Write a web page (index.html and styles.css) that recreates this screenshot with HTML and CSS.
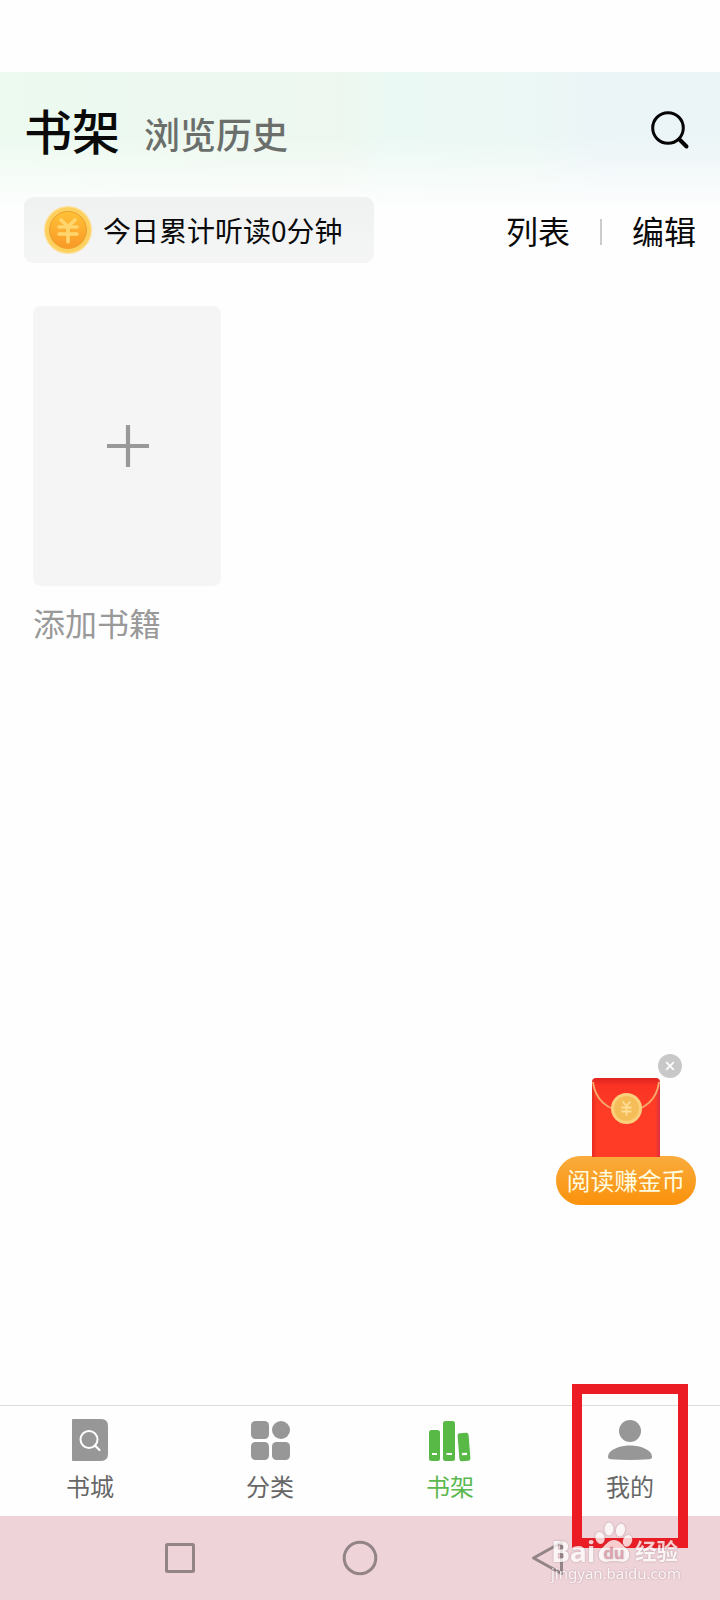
FILE: index.html
```html
<!DOCTYPE html>
<html lang="zh-CN">
<head>
<meta charset="utf-8">
<title>书架</title>
<link rel="stylesheet" href="styles.css">
</head>
<body>
<div class="screen">
  <header class="header">
    <div class="title-row">
      <h1 class="title">书架</h1>
      <span class="history">浏览历史</span>
      <svg class="search" width="40" height="40" viewBox="0 0 40 40" fill="none" stroke="#050505">
        <circle cx="18" cy="18" r="15.3" stroke-width="3"/>
        <path d="M29.5 29.5L36.5 36.5" stroke-width="4" stroke-linecap="round"/>
      </svg>
    </div>
    <div class="tools">
      <div class="reading">
        <svg width="50" height="50" viewBox="0 0 50 50">
          <defs>
            <linearGradient id="coin" x1="0" y1="0" x2="0" y2="1"><stop offset="0" stop-color="#ffc136"/><stop offset="1" stop-color="#fa9827"/></linearGradient>
          </defs>
          <circle cx="25" cy="25" r="24" fill="#fde09a"/>
          <circle cx="25" cy="25" r="22.8" fill="#fdcf5c"/>
          <circle cx="25" cy="25" r="18.5" fill="url(#coin)" stroke="#eda02f" stroke-width="1"/>
          <path d="M18 15L25 21.5L32 15M16 22H34M16 29H34M25 22V37" fill="none" stroke="#ffd56e" stroke-width="3.6" stroke-linecap="round" stroke-linejoin="round"/>
        </svg>
        <span class="reading-text">今日累计听读0分钟</span>
      </div>
      <div class="actions">
        <span>列表</span><i class="divider"></i><span>编辑</span>
      </div>
    </div>
  </header>

  <main class="shelf">
    <div class="add-card">
      <svg width="42" height="42" viewBox="0 0 42 42"><path d="M21 0V42M0 21H42" stroke="#999" stroke-width="4.2"/></svg>
    </div>
    <p class="add-label">添加书籍</p>
  </main>

  <nav class="tabs">
    <div class="tab">
      <svg width="44" height="44" viewBox="0 0 44 44">
        <path d="M5 1H33Q40 1 40 8V36Q40 43 33 43H5Q4 43 4 42V2Q4 1 5 1Z" fill="#979797"/>
        <circle cx="21" cy="21.5" r="8.5" fill="none" stroke="#fff" stroke-width="2"/>
        <path d="M27 27.5L31.5 32" stroke="#fff" stroke-width="2.2" stroke-linecap="round"/>
      </svg>
      <span>书城</span>
    </div>
    <div class="tab">
      <svg width="44" height="44" viewBox="0 0 44 44" fill="#979797">
        <rect x="3" y="3" width="18" height="18" rx="4.5"/>
        <circle cx="33" cy="12" r="9"/>
        <rect x="3" y="24" width="18" height="18" rx="4.5"/>
        <rect x="24" y="24" width="18" height="18" rx="4.5"/>
      </svg>
      <span>分类</span>
    </div>
    <div class="tab active">
      <svg width="44" height="44" viewBox="0 0 44 44" fill="#58b947">
        <rect x="1" y="12" width="11" height="31" rx="2.5"/>
        <rect x="15" y="3" width="12" height="40" rx="2.5"/>
        <rect x="30.500" y="15" width="11" height="28" rx="2.5" transform="rotate(-4.5 36 29)"/>
        <path d="M4 36H9M18.500 36H24M34 36.200L39 35.800" stroke="#fff" stroke-width="2.2"/>
      </svg>
      <span>书架</span>
    </div>
    <div class="tab">
      <svg width="44" height="44" viewBox="0 0 44 44" fill="#979797">
        <circle cx="22" cy="13" r="11"/>
        <path d="M0 39C0 32 11 27.500 22 27.500S44 32 44 39Q44 41 41 41.300Q22 42.800 3 41.300Q0 41 0 39Z"/>
      </svg>
      <span>我的</span>
    </div>
  </nav>

  <footer class="system-bar">
    <svg width="36" height="36" viewBox="0 0 36 36"><rect x="4.500" y="4.500" width="27" height="27" rx="1"/></svg>
    <svg width="36" height="36" viewBox="0 0 36 36"><circle cx="18" cy="18" r="15.800"/></svg>
    <svg width="36" height="36" viewBox="0 0 36 36"><path d="M39.500 2.500L11.500 18L39.500 33.500Z" stroke-linejoin="round"/></svg>
  </footer>

  <div class="promo">
    <svg class="promo-close" width="24" height="24" viewBox="0 0 24 24"><circle cx="12" cy="12" r="12" fill="#c8c8c8"/><path d="M8.200 8.200L15.800 15.800M15.800 8.200L8.200 15.800" stroke="#fff" stroke-width="1.700"/></svg>
    <svg class="envelope" width="68" height="79" viewBox="0 0 68 79">
      <defs>
        <linearGradient id="env"><stop offset="0" stop-color="#e72b22"/><stop offset=".07" stop-color="#ff3c26"/><stop offset=".93" stop-color="#ff3c26"/><stop offset="1" stop-color="#dc3040"/></linearGradient>
        <linearGradient id="flap" x1="0" y1="0" x2="0" y2="1"><stop offset="0" stop-color="#dd2420"/><stop offset=".25" stop-color="#fa3323"/><stop offset="1" stop-color="#ff3c26"/></linearGradient>
      </defs>
      <path d="M0 79V4Q0 0 4 0H64Q68 0 68 4V79Z" fill="url(#env)"/>
      <path d="M1 3Q2 0 5 0H63Q66 0 67 3C64 19 52 31 34 31S4 19 1 3Z" fill="url(#flap)"/>
      <path d="M1 4C3 21 15 33 34 33S65 21 67 4" fill="none" stroke="#f9a86c" stroke-width="2"/>
      <circle cx="34.500" cy="30.500" r="15.500" fill="#fbd07c"/>
      <circle cx="34.500" cy="30.500" r="12.500" fill="#f5bd58"/>
      <path d="M30.500 23.500L34.500 28L38.500 23.500M29.500 29.500H39.500M29.500 33.500H39.500M34.500 28.500V37.500" fill="none" stroke="#ffdf98" stroke-width="1.800"/>
    </svg>
    <div class="promo-button">阅读赚金币</div>
  </div>

  <div class="highlight"></div>

  <div class="watermark">
    <div class="brand">
      <span class="brand-latin">Bai</span>
      <svg width="38" height="42" viewBox="0 0 38 42" fill="#fff">
        <ellipse cx="5" cy="16" rx="4.500" ry="6" transform="rotate(-15 5 16)"/>
        <ellipse cx="14" cy="7" rx="4.500" ry="6.500"/>
        <ellipse cx="25.500" cy="8" rx="4.500" ry="6.500" transform="rotate(12 25 8)"/>
        <ellipse cx="32.500" cy="19" rx="4.500" ry="6" transform="rotate(20 33 19)"/>
        <path d="M19 18C13 18 10 24 6 27C2 31 3 40 11 40Q19 38 27 40C35 40 36 31 32 27C28 24 25 18 19 18Z"/>
        <text class="paw-text" x="19" y="37" text-anchor="middle">du</text>
      </svg>
      <span class="brand-han">经验</span>
    </div>
    <div class="site">jingyan.baidu.com</div>
  </div>
</div>
</body>
</html>
```
FILE: styles.css
```css
* { box-sizing: border-box; }

body {
  margin: 0;
  background: #fff;
  font-family: "Noto Sans CJK SC", sans-serif;
  color: #0a0a0a;
}

svg { display: block; flex: none; }

.screen {
  position: relative;
  display: flex;
  flex-direction: column;
  width: 720px;
  height: 1600px;
  overflow: hidden;
  background: #fefefe;
}

.header {
  margin-top: 72px;
  height: 200px;
  background:
    linear-gradient(180deg, rgba(254, 254, 254, 0) 0, rgba(254, 254, 254, 0) 64px, #fefefe 140px),
    linear-gradient(90deg, #ecfaf0 0, #edf7ef 340px, #ebf9f4 390px, #ebf7f4 540px, #ebf4f7 600px, #ebf4f6 720px);
}

.title-row {
  display: flex;
  align-items: center;
  height: 116px;
  padding: 0 30px 0 24px;
}

.title {
  margin: -3px 0 0;
  font-size: 48px;
  line-height: 60px;
  font-weight: 500;
}

.history {
  margin: 6px 0 0 24px;
  font-size: 36px;
  line-height: 48px;
  font-weight: 500;
  color: #6b6f6c;
}

.search { margin-left: auto; }

.tools {
  display: flex;
  align-items: center;
  justify-content: space-between;
  height: 66px;
  margin-top: 9px;
  padding: 0 24px;
}

.reading {
  display: flex;
  align-items: center;
  width: 350px;
  height: 66px;
  padding-left: 19px;
  border-radius: 9px;
  background: linear-gradient(180deg, #eff2f1, #f5f5f6);
}

.reading-text {
  margin-left: 10px;
  font-size: 28px;
  line-height: 40px;
  white-space: nowrap;
}

.actions {
  display: flex;
  align-items: center;
  font-size: 32px;
  line-height: 44px;
}

.divider {
  width: 2px;
  height: 26px;
  margin: 3px 30px 0;
  background: #ccc;
}

.shelf {
  flex: 1;
  padding: 34px 33px 0;
}

.add-card {
  display: flex;
  align-items: center;
  justify-content: center;
  width: 188px;
  height: 280px;
  padding-left: 2px;
  border-radius: 8px;
  background: #f5f5f5;
}

.add-label {
  margin: 14px 0 0;
  font-size: 32px;
  line-height: 44px;
  color: #999;
}

.tabs {
  display: flex;
  height: 111px;
  border-top: 1px solid #dcdcdc;
}

.tab {
  flex: 1;
  display: flex;
  flex-direction: column;
  align-items: center;
  padding-top: 12px;
  font-size: 24px;
  line-height: 36px;
  color: #666;
}

.tab span { margin-top: 6px; }

.tab.active { color: #5cb850; }

.system-bar {
  display: flex;
  justify-content: center;
  gap: 144px;
  height: 84px;
  padding-top: 24px;
  background: #eed3d9;
}

.system-bar svg {
  overflow: visible;
  fill: none;
  stroke: #938487;
  stroke-width: 3px;
}

.promo {
  position: absolute;
  left: 556px;
  top: 1054px;
  width: 140px;
}

.promo-close { margin-left: 102px; }

.envelope { margin-left: 36px; }

.promo-button {
  height: 49px;
  margin-top: -1px;
  border-radius: 25px;
  background: linear-gradient(180deg, #f9ac3d, #fb910b);
  color: #fffbe0;
  font-size: 23.7px;
  line-height: 49px;
  text-align: center;
}

.highlight {
  position: absolute;
  left: 572px;
  top: 1384px;
  width: 116px;
  height: 164px;
  border: 10px solid #ec1c24;
}

.watermark {
  position: absolute;
  left: 551px;
  top: 1522px;
  color: #fff;
  opacity: .78;
  text-shadow: 0 0 2px rgba(110, 80, 90, .6);
}

.brand {
  display: flex;
  align-items: flex-end;
  height: 42px;
}

.brand svg {
  margin-left: 1px;
  filter: drop-shadow(0 0 1px rgba(110, 80, 90, .5));
}

.brand-latin {
  width: 43px;
  font: bold 28.5px/26px "Open Sans", sans-serif;
  letter-spacing: -.3px;
}

.brand-han {
  margin-left: 2px;
  font-size: 21.5px;
  line-height: 28px;
  font-weight: 700;
}

.paw-text {
  font: bold 17px "Liberation Sans", sans-serif;
  fill: #d998a4;
}

.site {
  font: 15px/18px "Noto Sans", sans-serif;
}
```
